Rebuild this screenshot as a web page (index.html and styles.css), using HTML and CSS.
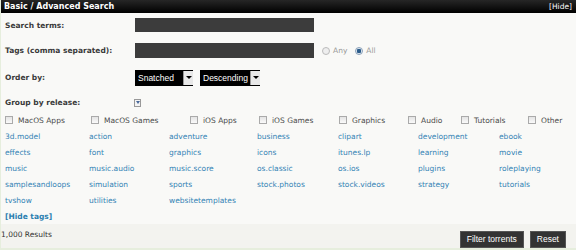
FILE: index.html
```html
<!DOCTYPE html>
<html>
<head>
<meta charset="utf-8">
<link rel="stylesheet" href="styles.css">
</head>
<body>
<div class="panel">
  <div class="head">
    <span class="title">Basic / Advanced Search</span>
    <span class="hide">[Hide]</span>
  </div>
  <div class="body">
    <div class="row r1">
      <div class="label">Search terms:</div>
      <div class="field"><span class="input"></span></div>
    </div>
    <div class="row r2">
      <div class="label">Tags (comma separated):</div>
      <div class="field">
        <span class="input"></span>
        <span class="radio"></span><span class="rtext">Any</span>
        <span class="radio on"></span><span class="rtext">All</span>
      </div>
    </div>
    <div class="row r3">
      <div class="label">Order by:</div>
      <div class="field">
        <span class="select s1">Snatched<span class="arrow"></span></span>
        <span class="select s2">Descending<span class="arrow"></span></span>
      </div>
    </div>
    <div class="row r4">
      <div class="label">Group by release:</div>
      <div class="field"><span class="check on"></span></div>
    </div>
    <div class="cats">
      <span class="cat c1"><span class="check"></span>MacOS Apps</span>
      <span class="cat c2"><span class="check"></span>MacOS Games</span>
      <span class="cat c3"><span class="check"></span>iOS Apps</span>
      <span class="cat c4"><span class="check"></span>iOS Games</span>
      <span class="cat c5"><span class="check"></span>Graphics</span>
      <span class="cat c6"><span class="check"></span>Audio</span>
      <span class="cat c7"><span class="check"></span>Tutorials</span>
      <span class="cat c8"><span class="check"></span>Other</span>
    </div>
    <div class="tags">
      <a>3d.model</a><a>action</a><a>adventure</a><a>business</a><a>clipart</a><a>development</a><a>ebook</a>
      <a>effects</a><a>font</a><a>graphics</a><a>icons</a><a>itunes.lp</a><a>learning</a><a>movie</a>
      <a>music</a><a>music.audio</a><a>music.score</a><a>os.classic</a><a>os.ios</a><a>plugins</a><a>roleplaying</a>
      <a>samplesandloops</a><a>simulation</a><a>sports</a><a>stock.photos</a><a>stock.videos</a><a>strategy</a><a>tutorials</a>
      <a>tvshow</a><a>utilities</a><a>websitetemplates</a>
    </div>
    <div class="hidetags">[Hide tags]</div>
  </div>
  <div class="foot">
    <span class="results">1,000 Results</span>
    <span class="buttons"><span class="btn">Filter torrents</span><span class="btn">Reset</span></span>
  </div>
</div>
</body>
</html>
```

FILE: styles.css
```css
html, body {
  margin: 0;
  padding: 0;
  background: #f9f9f7;
}
body {
  font-family: "DejaVu Sans", Verdana, sans-serif;
  font-size: 7.5px;
  color: #333;
}
.panel {
  width: 576px;
  height: 250px;
  box-sizing: border-box;
  border-left: 1px solid #e6eedd;
  border-bottom: 2px solid #e6eedd;
  display: flex;
  flex-direction: column;
}
.head {
  height: 17px;
  background: linear-gradient(#262626, #000);
  color: #fff;
  display: flex;
  justify-content: space-between;
  align-items: center;
  padding: 0 4px 0 3px;
}
.title {
  font-weight: bold;
  font-size: 8px;
}
.hide {
  font-size: 7.5px;
}
.body {
  flex: 1;
  padding: 2px 4px 0 4px;
}
.row {
  display: grid;
  grid-template-columns: 130px 1fr;
}
.label {
  font-weight: bold;
  color: #3a3a3a;
  padding-top: 3px;
}
.r1 { height: 25px; padding-top: 3px; }
.r2 { height: 25px; }
.r3 { height: 25px; padding-top: 2px; }
.r4 { height: 17px; }
.field {
  display: flex;
  align-items: flex-start;
}
.input {
  display: block;
  width: 179px;
  height: 14px;
  background: #3c3c3c;
  margin-top: 0;
}
.r2 .field { align-items: center; height: 15px; }
.r2 .input { height: 15px; }
.radio {
  width: 8px;
  height: 8px;
  border-radius: 50%;
  box-sizing: border-box;
  border: 1px solid #bbb;
  background: #eee;
  margin-left: 8px;
}
.radio.on {
  background: radial-gradient(circle, #2b5b8a 0 2px, #dfe8f0 2.5px);
  border-color: #8aa0b8;
  margin-left: 8px;
}
.rtext {
  color: #999;
  margin-left: 3px;
}
.select {
  position: relative;
  display: block;
  height: 16px;
  line-height: 16px;
  background: #000;
  color: #fff;
  font-family: "Liberation Sans", Arial, sans-serif;
  font-size: 8.5px;
  padding-left: 3px;
  box-sizing: border-box;
}
.s1 { width: 58px; }
.s2 { width: 60px; margin-left: 7px; }
.arrow {
  position: absolute;
  right: 0;
  top: 1px;
  width: 9px;
  height: 14px;
  background: #e8e8e8;
  border-left: 1px solid #999;
}
.arrow::after {
  content: "";
  position: absolute;
  left: 2px;
  top: 5px;
  border-left: 3px solid transparent;
  border-right: 3px solid transparent;
  border-top: 3px solid #000;
}
.check {
  display: inline-block;
  width: 7px;
  height: 8px;
  box-sizing: border-box;
  border: 1px solid #aaa;
  background: linear-gradient(#e4e4e4, #fafafa);
}
.r4 .field { padding-left: 0; padding-top: 4px; }
.r4 .check.on {
  margin-left: -1px;
  background: #f4f4f4;
  border-color: #999;
  position: relative;
}
.r4 .check.on::after {
  content: "";
  position: absolute;
  left: 1px;
  top: 1px;
  border-left: 2px solid transparent;
  border-right: 2px solid transparent;
  border-top: 3px solid #4a6a9a;
}
.cats {
  display: flex;
  height: 16px;
  align-items: center;
  color: #4a4a4a;
}
.cat {
  display: flex;
  align-items: center;
  gap: 5px;
}
.cat .check { width: 8px; height: 8px; }
.c1 { width: 86px; }
.c2 { width: 99px; }
.c3 { width: 69px; }
.c4 { width: 80px; }
.c5 { width: 69px; }
.c6 { width: 53px; }
.c7 { width: 67px; }
.tags {
  display: grid;
  grid-template-columns: 84px 80px 88px 81px 80px 81px 1fr;
  grid-auto-rows: 16px;
  color: #3383b5;
  padding-top: 1px;
}
.tags a {
  line-height: 16px;
}
.hidetags {
  font-weight: bold;
  color: #2b7fb0;
  margin-top: 1px;
  line-height: 14px;
}
.foot {
  height: 26px;
  background: #f3f3ef;
  display: flex;
  justify-content: space-between;
  align-items: flex-start;
  padding: 0 10px 0 0;
}
.results {
  padding-top: 6px;
  color: #333;
}
.buttons {
  display: flex;
  gap: 6px;
  padding-top: 7px;
}
.btn {
  background: #333;
  color: #fff;
  font-family: "Liberation Sans", Arial, sans-serif;
  font-size: 8.5px;
  height: 17px;
  line-height: 17px;
  padding: 0 7px;
  box-shadow: 0 0 0 1px #555 inset;
}
```
